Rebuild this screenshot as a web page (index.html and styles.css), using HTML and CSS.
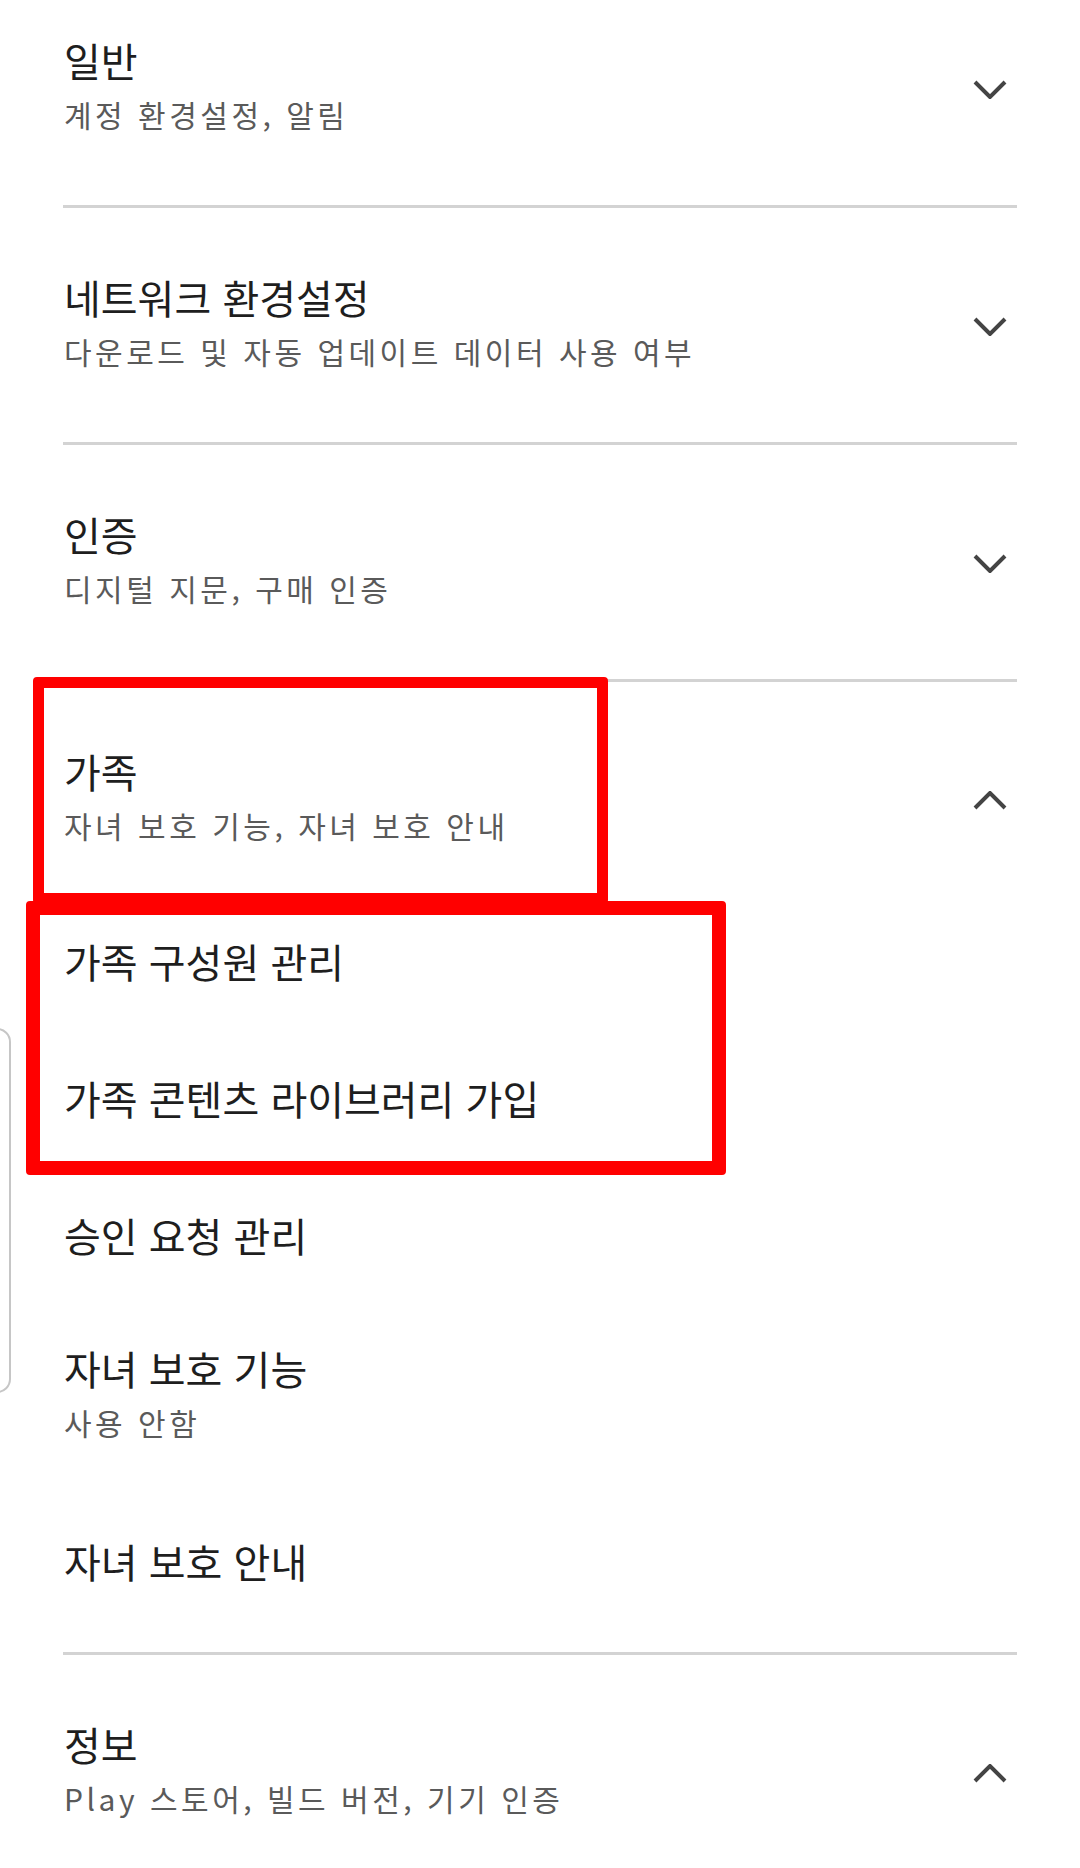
FILE: index.html
```html
<!DOCTYPE html>
<html lang="ko">

<head>
    <meta charset="utf-8">
    <meta name="viewport" content="width=device-width, initial-scale=1.0">
    <title>설정</title>
    <link rel="stylesheet" href="styles.css">
</head>

<body>
    <div id="liste">
        <section class="gruppe">
            <div class="hoved">
                <div class="tekst">
                    <h2>일반</h2>
                    <p>계정 환경설정, 알림</p>
                </div>
                <svg class="pil" viewBox="0 0 34 19"><polyline points="2,2 17,17 32,2" /></svg>
            </div>
        </section>

        <section class="gruppe">
            <div class="hoved">
                <div class="tekst">
                    <h2>네트워크 환경설정</h2>
                    <p>다운로드 및 자동 업데이트 데이터 사용 여부</p>
                </div>
                <svg class="pil" viewBox="0 0 34 19"><polyline points="2,2 17,17 32,2" /></svg>
            </div>
        </section>

        <section class="gruppe">
            <div class="hoved">
                <div class="tekst">
                    <h2>인증</h2>
                    <p>디지털 지문, 구매 인증</p>
                </div>
                <svg class="pil" viewBox="0 0 34 19"><polyline points="2,2 17,17 32,2" /></svg>
            </div>
        </section>

        <section class="gruppe aaben">
            <div class="hoved">
                <div class="tekst">
                    <h2>가족</h2>
                    <p>자녀 보호 기능, 자녀 보호 안내</p>
                </div>
                <svg class="pil" viewBox="0 0 34 19"><polyline points="2,17 17,2 32,17" /></svg>
            </div>
            <ul class="punkter">
                <li>가족 구성원 관리</li>
                <li>가족 콘텐츠 라이브러리 가입</li>
                <li>승인 요청 관리</li>
                <li class="med-tekst">자녀 보호 기능<p>사용 안함</p></li>
                <li>자녀 보호 안내</li>
            </ul>
        </section>

        <section class="gruppe">
            <div class="hoved">
                <div class="tekst">
                    <h2>정보</h2>
                    <p>Play 스토어, 빌드 버전, 기기 인증</p>
                </div>
                <svg class="pil" viewBox="0 0 34 19"><polyline points="2,17 17,2 32,17" /></svg>
            </div>
        </section>
    </div>

    <!-- kant-håndtag og de røde markeringer ligger ovenpå -->
    <div id="haandtag"></div>
    <div class="markering" id="boks1"></div>
    <div class="markering" id="boks2"></div>
</body>

</html>
```

FILE: styles.css
```css
* {
    box-sizing: border-box;
}

body {
    margin: 0;
    background-color: white;
    font-family: "Noto Sans CJK KR", "Noto Sans", sans-serif;
    position: relative;
    height: 1868px;
    overflow: hidden;
}

#liste {
    margin-top: -29px;
}

.gruppe {
    margin: 0 63px;
    border-bottom: 3px solid #d3d3d3;
}

.gruppe:last-child {
    border-bottom: none;
}

.hoved {
    display: flex;
    align-items: center;
    justify-content: space-between;
    padding: 64px 0 62px 1px;
}

.aaben .hoved {
    padding-bottom: 38px;
}

h2 {
    margin: 0;
    font-size: 40px;
    line-height: 50px;
    font-weight: 400;
    color: #1e1e1e;
}

.tekst p,
.punkter p {
    margin: 0;
    font-size: 30px;
    line-height: 58px;
    letter-spacing: 3.5px;
    color: #5a5a5a;
}

.pil {
    width: 34px;
    height: 19px;
    margin-right: 10px;
    fill: none;
    stroke: #444;
    stroke-width: 4;
}

.punkter {
    list-style: none;
    margin: 0;
    padding: 0 0 23px 1px;
}

.punkter li {
    font-size: 40px;
    line-height: 50px;
    color: #1e1e1e;
    padding: 44px 0 43px;
}

.punkter li.med-tekst {
    padding: 40px 0 41px;
}

/* OVENPÅ */

#haandtag {
    position: absolute;
    left: -20px;
    top: 1028px;
    width: 31px;
    height: 365px;
    border: 2px solid #c6c6c6;
    border-radius: 14px;
}

.markering {
    position: absolute;
    border-style: solid;
    border-color: #ff0000;
    border-radius: 4px;
}

#boks1 {
    left: 33px;
    top: 677px;
    width: 575px;
    height: 227px;
    border-width: 11px;
}

#boks2 {
    left: 26px;
    top: 901px;
    width: 700px;
    height: 274px;
    border-width: 14px;
}
```
